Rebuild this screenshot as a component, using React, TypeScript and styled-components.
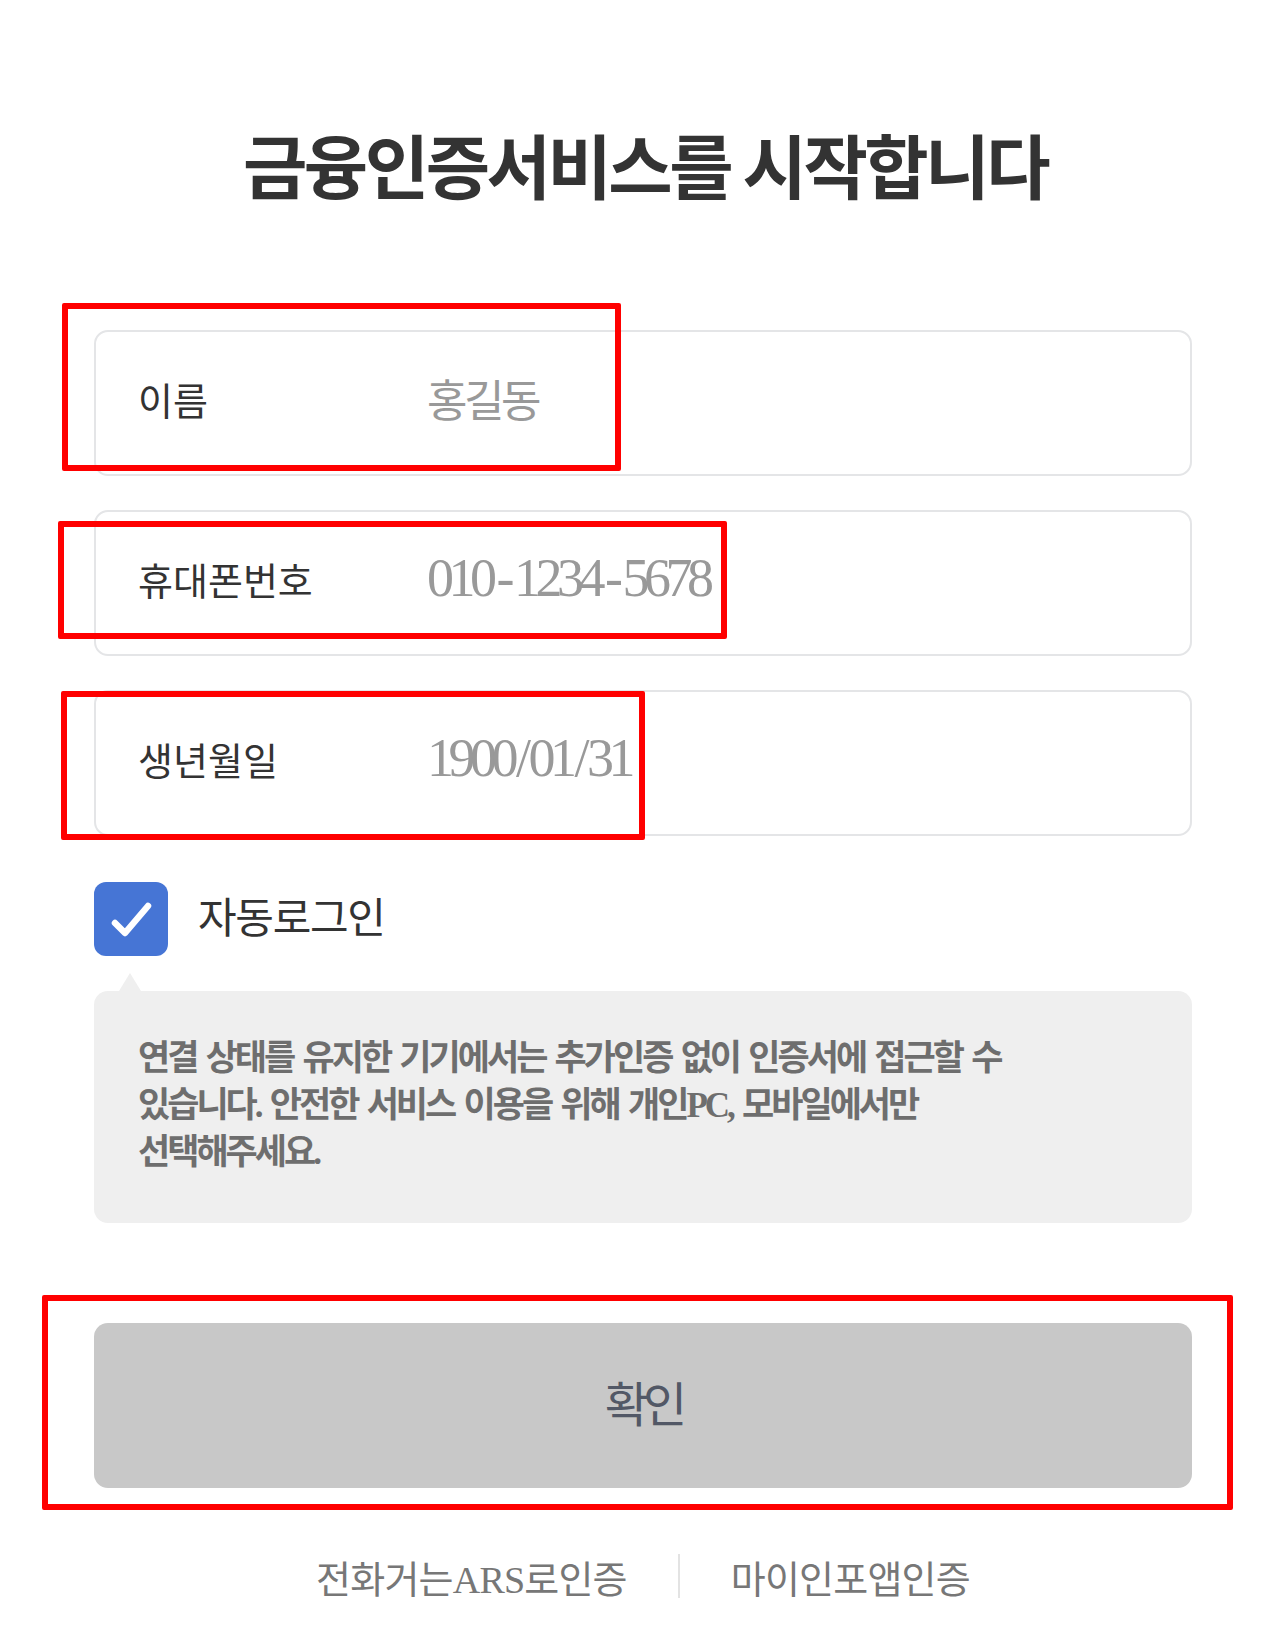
import React from "react";
import styled, { createGlobalStyle } from "styled-components";

const GlobalStyle = createGlobalStyle`
  html, body { margin: 0; padding: 0; background: #ffffff; }
  body { font-family: "Liberation Serif", "Noto Sans CJK KR", serif; }
  * { box-sizing: border-box; }
`;

const Page = styled.div`
  position: relative;
  width: 1284px;
  height: 1632px;
  padding: 122px 92px 0 94px;
  display: flex;
  flex-direction: column;
  overflow: hidden;
`;

const Title = styled.h1`
  margin: 0;
  padding-left: 4px;
  text-align: center;
  font-family: "Noto Sans CJK KR", sans-serif;
  font-weight: 700;
  font-size: 70px;
  line-height: 84px;
  letter-spacing: -3.5px;
  color: #333333;
`;

const Form = styled.div`
  margin-top: 124px;
  display: flex;
  flex-direction: column;
  gap: 34px;
`;

const Field = styled.div`
  height: 146px;
  border: 2px solid #e4e5e7;
  border-radius: 14px;
  display: flex;
  align-items: center;
  padding: 0 0 10px 42px;
  background: #ffffff;
`;

const Label = styled.span`
  width: 289px;
  flex-shrink: 0;
  font-family: "Noto Sans CJK KR", sans-serif;
  font-size: 38px;
  letter-spacing: 0px;
  color: #333333;
`;

const Value = styled.span<{ $numeric?: boolean }>`
  font-family: "Liberation Serif", "Noto Sans CJK KR", serif;
  font-size: ${(p) => (p.$numeric ? "54px" : "44px")};
  letter-spacing: ${(p) => (p.$numeric ? "-5.5px" : "-3.5px")};
  color: #999999;
  white-space: nowrap;
`;

const Sep = styled.span<{ $gap: number }>`
  margin: 0 ${(p) => p.$gap}px;
`;

const CheckRow = styled.div`
  margin-top: 46px;
  height: 74px;
  display: flex;
  align-items: center;
  gap: 30px;
`;

const CheckBox = styled.div`
  width: 74px;
  height: 74px;
  border-radius: 12px;
  background: #4675d5;
  display: flex;
  align-items: center;
  justify-content: center;
  flex-shrink: 0;
`;

const CheckLabel = styled.span`
  padding-bottom: 10px;
  font-family: "Noto Sans CJK KR", sans-serif;
  font-size: 42px;
  letter-spacing: -1.3px;
  color: #333333;
`;

const InfoBox = styled.div`
  position: relative;
  margin-top: 35px;
  padding: 44px 44px 47px;
  background: #efefef;
  border-radius: 14px;

  &::before {
    content: "";
    position: absolute;
    left: 25px;
    top: -18px;
    border-left: 11px solid transparent;
    border-right: 11px solid transparent;
    border-bottom: 18px solid #efefef;
  }
`;

const InfoLine = styled.div`
  font-family: "Liberation Serif", "Noto Sans CJK KR", serif;
  font-weight: 700;
  font-size: 35px;
  line-height: 47px;
  letter-spacing: -3px;
  word-spacing: 3.5px;
  color: #6e6e6e;
  white-space: nowrap;
`;

const ConfirmButton = styled.button`
  margin-top: 100px;
  height: 165px;
  width: 100%;
  padding: 0 0 10px;
  border: none;
  border-radius: 14px;
  background: #c8c8c8;
  font-family: "Noto Sans CJK KR", sans-serif;
  font-size: 48px;
  letter-spacing: -6px;
  color: #525866;
  cursor: pointer;
`;

const Footer = styled.div`
  margin-top: 63px;
  height: 50px;
  display: flex;
  align-items: center;
  justify-content: center;
  gap: 51px;
`;

const FooterLink = styled.a`
  font-family: "Liberation Serif", "Noto Sans CJK KR", serif;
  font-size: 38px;
  letter-spacing: -0.8px;
  color: #777777;
  text-decoration: none;
  white-space: nowrap;
`;

const Divider = styled.span`
  width: 2px;
  height: 44px;
  background: #e3e3e3;
`;

const Highlight = styled.div<{ $x: number; $y: number; $w: number; $h: number }>`
  position: absolute;
  left: ${(p) => p.$x}px;
  top: ${(p) => p.$y}px;
  width: ${(p) => p.$w}px;
  height: ${(p) => p.$h}px;
  border: 6px solid #ff0000;
  border-radius: 2px;
  pointer-events: none;
`;

const CheckIcon = () => (
  <svg width="74" height="74" viewBox="0 0 74 74" fill="none">
    <path
      d="M21 41 L31 51 L54 24"
      stroke="#ffffff"
      strokeWidth="6.5"
      strokeLinecap="round"
      strokeLinejoin="round"
    />
  </svg>
);

const highlights = [
  { x: 62, y: 303, w: 559, h: 168 },
  { x: 58, y: 521, w: 669, h: 118 },
  { x: 61, y: 691, w: 584, h: 149 },
  { x: 42, y: 1295, w: 1191, h: 215 },
];

export default function App() {
  return (
    <>
      <GlobalStyle />
      <Page>
        <Title>금융인증서비스를 시작합니다</Title>
        <Form>
          <Field>
            <Label>이름</Label>
            <Value>홍길동</Value>
          </Field>
          <Field>
            <Label>휴대폰번호</Label>
            <Value $numeric>
              010<Sep $gap={5}>-</Sep>1234<Sep $gap={5}>-</Sep>5678
            </Value>
          </Field>
          <Field>
            <Label>생년월일</Label>
            <Value $numeric>
              1900<Sep $gap={3}>/</Sep>01<Sep $gap={3}>/</Sep>31
            </Value>
          </Field>
        </Form>
        <CheckRow>
          <CheckBox>
            <CheckIcon />
          </CheckBox>
          <CheckLabel>자동로그인</CheckLabel>
        </CheckRow>
        <InfoBox>
          <InfoLine>연결 상태를 유지한 기기에서는 추가인증 없이 인증서에 접근할 수</InfoLine>
          <InfoLine>있습니다. 안전한 서비스 이용을 위해 개인PC, 모바일에서만</InfoLine>
          <InfoLine>선택해주세요.</InfoLine>
        </InfoBox>
        <ConfirmButton>확인</ConfirmButton>
        <Footer>
          <FooterLink href="#">전화거는ARS로인증</FooterLink>
          <Divider />
          <FooterLink href="#">마이인포앱인증</FooterLink>
        </Footer>
        {highlights.map((h, i) => (
          <Highlight key={i} $x={h.x} $y={h.y} $w={h.w} $h={h.h} />
        ))}
      </Page>
    </>
  );
}
